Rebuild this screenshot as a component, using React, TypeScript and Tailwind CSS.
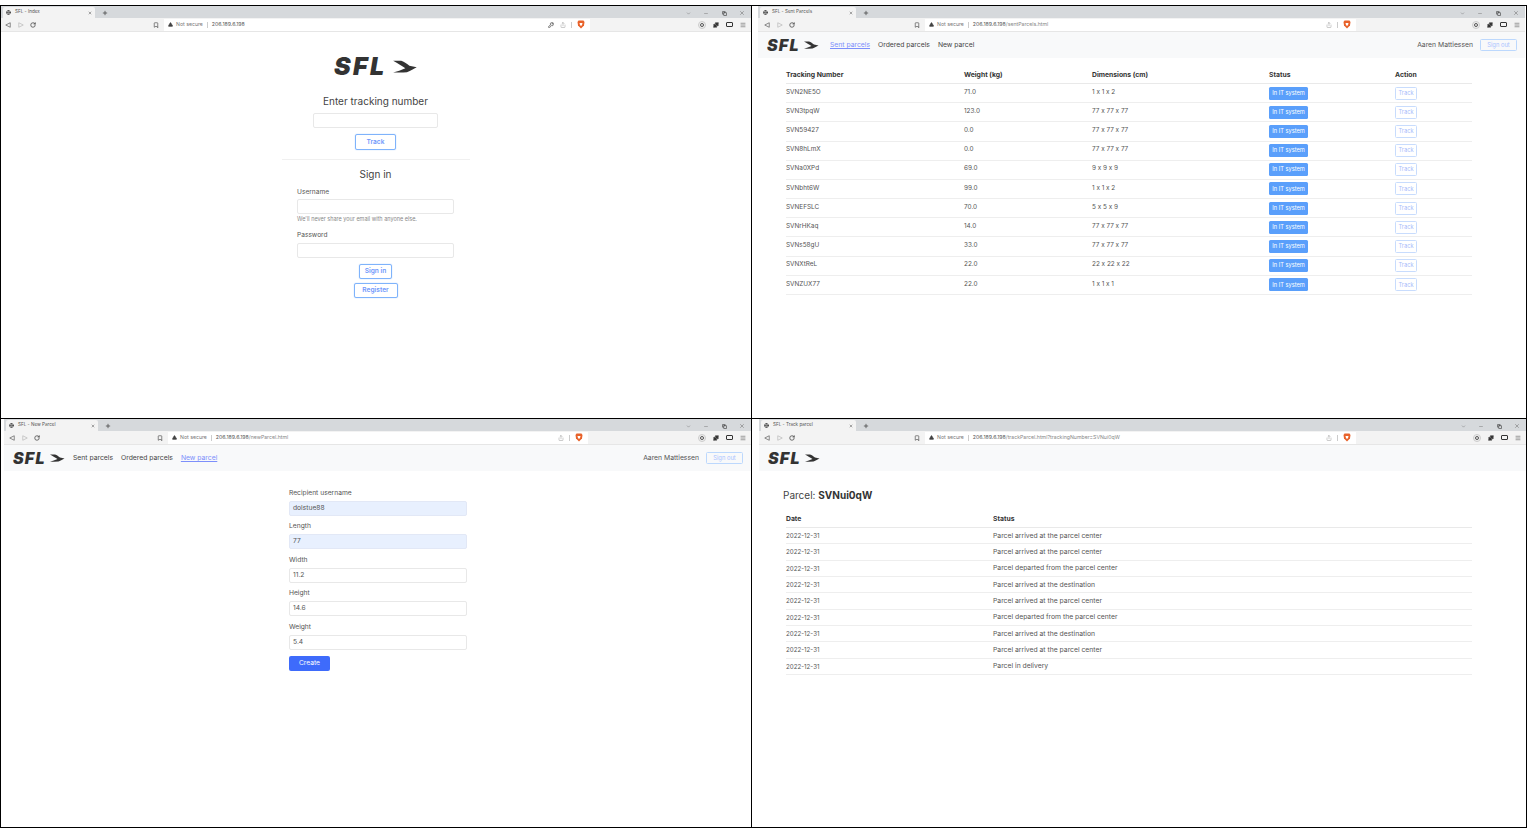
import { AlertTriangle, ChevronDown, Copy, Globe, KeyRound, Menu, Minus, Plus, RotateCw, Share, Bookmark, Puzzle, X } from "lucide-react";

const sentParcels = [
  ["SVN2NE5O", "71.0", "1 x 1 x 2"],
  ["SVN3tpqW", "123.0", "77 x 77 x 77"],
  ["SVN59427", "0.0", "77 x 77 x 77"],
  ["SVN8hLmX", "0.0", "77 x 77 x 77"],
  ["SVNa0XPd", "69.0", "9 x 9 x 9"],
  ["SVNbht6W", "99.0", "1 x 1 x 2"],
  ["SVNEFSLC", "70.0", "5 x 5 x 9"],
  ["SVNrHKaq", "14.0", "77 x 77 x 77"],
  ["SVNs58gU", "33.0", "77 x 77 x 77"],
  ["SVNXtReL", "22.0", "22 x 22 x 22"],
  ["SVNZUX77", "22.0", "1 x 1 x 1"],
];

const trackEvents = [
  "Parcel arrived at the parcel center",
  "Parcel arrived at the parcel center",
  "Parcel departed from the parcel center",
  "Parcel arrived at the destination",
  "Parcel arrived at the parcel center",
  "Parcel departed from the parcel center",
  "Parcel arrived at the destination",
  "Parcel arrived at the parcel center",
  "Parcel in delivery",
];

const formFields = [
  { label: "Recipient username", value: "dolstue88", filled: true },
  { label: "Length", value: "77", filled: true },
  { label: "Width", value: "11.2", filled: false },
  { label: "Height", value: "14.6", filled: false },
  { label: "Weight", value: "5.4", filled: false },
];

function Bird({ className }: { className: string }) {
  return (
    <svg viewBox="0 0 32 16" className={className} fill="#333">
      <path d="M3 1H13C17 2 20 5 23 7L32 9C28 11 25 13 20 15C14 15.5 8 15.5 3 15.5C8 14 13 12 18 10C14 8 9 4 3 1Z" />
    </svg>
  );
}

function Logo({ large }: { large?: boolean }) {
  if (large) {
    return (
      <div className="flex h-[20px] w-[83px] items-center gap-[3px]">
        <span className="text-[25px] leading-none font-black tracking-[2.4px] text-[#333] italic">SFL</span>
        <Bird className="h-[13px] w-[28px]" />
      </div>
    );
  }
  return (
    <div className="flex h-[14px] w-[54px] items-center gap-[2px]">
      <span className="text-[16px] leading-none font-black tracking-[1.2px] text-[#333] italic">SFL</span>
      <Bird className="h-[8px] w-[17px]" />
    </div>
  );
}

function BraveIcon() {
  return (
    <svg viewBox="0 0 16 18" className="h-[9px] w-[8px]">
      <path d="M3 1H13L15 4L14 11L8 17L2 11L1 4Z" fill="#e8622a" />
      <path d="M5 6H11L10 10L8 12L6 10Z" fill="#fff" />
    </svg>
  );
}

function Chrome({
  title,
  url,
  tabClass,
  navClass,
  urlClass,
  showKey,
}: {
  title: string;
  url: string;
  tabClass: string;
  navClass: string;
  urlClass: string;
  showKey?: boolean;
}) {
  const parts = url.split("206.189.6.198");
  return (
    <>
      <div className="flex h-[12px] items-end bg-[#d6d9dc] pr-[6px]">
        <div className={`flex h-[11px] items-center rounded-t-[2px] bg-[#f3f3f3] pr-[3px] pl-[3px] ${tabClass}`}>
          <Globe className="h-[5px] w-[5px] text-[#444]" strokeWidth={3} />
          <span className="ml-[4px] text-[4.6px] whitespace-nowrap text-[#555]">{title}</span>
          <X className="ml-auto h-[4px] w-[4px] text-[#555]" strokeWidth={3} />
        </div>
        <Plus className="mb-[2px] ml-[7px] h-[6px] w-[6px] text-[#444]" strokeWidth={3} />
        <div className="mb-[2px] ml-auto flex items-center gap-[12.5px] text-[#666]">
          <ChevronDown className="h-[5px] w-[5px]" strokeWidth={2} />
          <Minus className="h-[5px] w-[6px]" strokeWidth={2} />
          <Copy className="h-[5px] w-[5px] text-[#333]" strokeWidth={3} />
          <X className="h-[6px] w-[6px]" strokeWidth={2} />
        </div>
      </div>
      <div className="flex h-[14px] items-center border-b border-[#e6e6e6] bg-[#f3f3f3] pr-[5px]">
        <div className={`flex items-center ${navClass}`}>
          <svg viewBox="0 0 8 8" className="h-[6px] w-[6px]">
            <path d="M7 1V7L1 4Z" fill="none" stroke="#666" />
          </svg>
          <svg viewBox="0 0 8 8" className="ml-[7px] h-[6px] w-[6px]">
            <path d="M1 1V7L7 4Z" fill="none" stroke="#bbb" />
          </svg>
          <RotateCw className="ml-[6px] h-[6px] w-[6px] text-[#444]" strokeWidth={3} />
          <Bookmark className="mr-[1px] ml-auto h-[6px] w-[6px] text-[#444]" strokeWidth={2.5} />
        </div>
        <div className={`ml-[4px] flex h-[12px] items-center bg-white pr-[5px] pl-[4px] ${urlClass}`}>
          <AlertTriangle className="h-[5px] w-[5px] fill-[#444] text-[#444]" strokeWidth={2} />
          <span className="ml-[3px] text-[5.2px] text-[#777]">Not secure</span>
          <span className="mx-[4px] h-[6px] w-px bg-[#ccc]" />
          <span className="text-[5.2px] text-[#555]">206.189.6.198</span>
          <span className="text-[5.2px] text-[#888]">{parts[1]}</span>
          {showKey && <KeyRound className="ml-auto h-[6px] w-[6px] text-[#444]" strokeWidth={2.5} />}
          <Share className={`h-[6px] w-[6px] text-[#999] ${showKey ? "ml-[6px]" : "ml-auto"}`} />
          <span className="mx-[5px] h-[6px] w-px bg-[#ccc]" />
          <BraveIcon />
        </div>
        <div className="ml-auto flex items-center gap-[7px]">
          <span className="flex h-[8px] w-[8px] items-center justify-center rounded-full border border-[#ccc] bg-[#eee]">
            <span className="h-[4px] w-[4px] rounded-full border border-[#555]" />
          </span>
          <Puzzle className="h-[6px] w-[6px] fill-[#333] text-[#333]" />
          <span className="h-[5px] w-[7px] rounded-[1px] border border-[#333]" />
          <Menu className="h-[6px] w-[6px] text-[#666]" strokeWidth={2.5} />
        </div>
      </div>
    </>
  );
}

function Navbar({ active, linksClass, signedIn = true }: { active?: string; linksClass?: string; signedIn?: boolean }) {
  const links = ["Sent parcels", "Ordered parcels", "New parcel"];
  return (
    <div className="flex h-[26px] items-center bg-[#f8f9fa] pr-[8px] pl-[9px]">
      <Logo />
      {signedIn && (
        <>
          <div className={`flex gap-[8px] pt-[1px] text-[6.8px] ${linksClass}`}>
            {links.map((link) => (
              <span key={link} className={link === active ? "text-[#7d8ffb] underline" : "text-[#444]"}>
                {link}
              </span>
            ))}
          </div>
          <span className="ml-auto pt-[1px] text-[6.8px] text-[#555]">Aaren Mattiessen</span>
          <span className="ml-[7px] flex h-[12px] w-[37px] items-center justify-center rounded-[1.5px] border border-[#bcd8fd] text-[5.8px] text-[#a9c2ff]">
            Sign out
          </span>
        </>
      )}
    </div>
  );
}

function Field({ className }: { className: string }) {
  return <div className={`h-[15px] rounded-[2px] border border-[#e8e8e8] bg-white ${className}`} />;
}

function OutlineButton({ children, className }: { children: string; className: string }) {
  return (
    <div
      className={`flex items-center justify-center rounded-[2px] border border-[#7fb3fb] pt-[1px] text-[6.6px] font-semibold text-[#7098fb] shadow-[0_0_1px_#7fb3fb] ${className}`}
    >
      {children}
    </div>
  );
}

function IndexPage() {
  return (
    <div className="flex flex-col items-center pt-[24px] pr-[1px] text-[#444]">
      <Logo large />
      <h2 className="mt-[19px] text-[10px] leading-[12px] text-[#444]">Enter tracking number</h2>
      <Field className="mt-[6px] w-[125px]" />
      <OutlineButton className="mt-[6px] h-[16px] w-[41px]">Track</OutlineButton>
      <div className="mt-[9px] w-[188px] border-t border-[#f0f0f0]" />
      <h2 className="mt-[8px] text-[10px] leading-[13px]">Sign in</h2>
      <div className="mt-[5px] w-[157px] text-[6.6px]">
        <div className="pt-[1px] leading-[10px] text-[#555]">Username</div>
        <Field className="mt-[2px] w-[157px]" />
        <div className="mt-[2px] text-[5.5px] leading-[7px] text-[#888]">We'll never share your email with anyone else.</div>
        <div className="mt-[7px] leading-[10px] text-[#555]">Password</div>
        <Field className="mt-[3px] w-[157px]" />
      </div>
      <OutlineButton className="mt-[6px] h-[15px] w-[33px]">Sign in</OutlineButton>
      <OutlineButton className="mt-[4px] h-[15px] w-[44px]">Register</OutlineButton>
    </div>
  );
}

function SentParcelsPage() {
  return (
    <div className="pt-[10px] pl-[28px] text-[6.4px] text-[#555] [font-feature-settings:'calt'_0]">
      <div className="grid h-[16px] w-[686px] grid-cols-[178px_128px_177px_126px_77px] items-center border-b border-[#e9e9e9] text-[6.8px] font-bold text-[#333]">
        <span>Tracking Number</span>
        <span>Weight (kg)</span>
        <span>Dimensions (cm)</span>
        <span>Status</span>
        <span>Action</span>
      </div>
      {sentParcels.map(([id, weight, dims]) => (
        <div
          key={id}
          className="grid h-[19.18px] w-[686px] grid-cols-[178px_128px_177px_126px_77px] items-center border-b border-[#eeeeee]"
        >
          <span className="-mt-[1px]">{id}</span>
          <span className="-mt-[1px]">{weight}</span>
          <span className="-mt-[1px]">{dims}</span>
          <span className="flex h-[13px] w-[39px] items-center justify-center rounded-[1.5px] bg-[#5a9ffb] text-[5.7px] text-white">
            In IT system
          </span>
          <span className="flex h-[13px] w-[22px] items-center justify-center rounded-[1.5px] border border-[#c8dcfd] text-[5.7px] text-[#a9bdfb]">
            Track
          </span>
        </div>
      ))}
    </div>
  );
}

function NewParcelPage() {
  return (
    <div className="ml-[285px] w-[178px] pt-[15.5px] text-[6.7px]">
      {formFields.map((field) => (
        <div key={field.label} className="mb-[4.5px]">
          <div className="h-[14px] leading-[12px] text-[#555]">{field.label}</div>
          <div
            className={`flex h-[15px] items-center rounded-[2px] border px-[3px] text-[#555] ${
              field.filled ? "border-[#e2e8f6] bg-[#e8f0fe]" : "border-[#e8e8e8] bg-white"
            }`}
          >
            {field.value}
          </div>
        </div>
      ))}
      <div className="mt-[6px] flex h-[15px] w-[41px] items-center justify-center rounded-[2px] bg-[#3e6bfb] text-white">
        Create
      </div>
    </div>
  );
}

function TrackPage() {
  return (
    <div className="pt-[17px] pl-[24px] text-[6.8px] text-[#555]">
      <h1 className="text-[10px] leading-[14px] text-[#444]">
        Parcel: <strong className="font-bold text-[#333]">SVNui0qW</strong>
      </h1>
      <div className="mt-[10px] ml-[3px] w-[686px]">
        <div className="grid h-[16px] grid-cols-[207px_479px] items-center border-b border-[#e9e9e9] font-bold text-[#333]">
          <span>Date</span>
          <span>Status</span>
        </div>
        {trackEvents.map((event, index) => (
          <div key={index} className="grid h-[16.33px] grid-cols-[207px_479px] items-center border-b border-[#eeeeee]">
            <span className="text-[6.2px]">2022-12-31</span>
            <span>{event}</span>
          </div>
        ))}
      </div>
    </div>
  );
}

export default function App() {
  return (
    <div className="h-[831px] w-[1530px] overflow-hidden bg-white pt-[5px] font-[Inter,sans-serif]">
      <div className="grid h-[823px] w-[1527px] grid-cols-[751px_775px] grid-rows-[413px_409px] border-r border-b border-black">
        <div className="border-t border-l border-black">
          <Chrome
            title="SFL - Index"
            url="206.189.6.198"
            tabClass="ml-[2px] w-[92px]"
            navClass="w-[159px] pl-[4px]"
            urlClass="w-[426px]"
            showKey
          />
          <IndexPage />
        </div>
        <div className="border-t border-l border-black">
          <div className="mr-[1px] ml-[6px]">
            <Chrome
              title="SFL - Sent Parcels"
              url="206.189.6.198/sentParcels.html"
              tabClass="ml-[2px] w-[96px]"
              navClass="w-[163px] pl-[6px]"
              urlClass="w-[431px]"
            />
            <Navbar active="Sent parcels" linksClass="ml-[9px]" />
            <SentParcelsPage />
          </div>
        </div>
        <div className="border-t border-l border-black">
          <div className="ml-[3px]">
            <Chrome
              title="SFL - New Parcel"
              url="206.189.6.198/newParcel.html"
              tabClass="ml-[2px] w-[92px]"
              navClass="w-[160px] pl-[5px]"
              urlClass="w-[420px]"
            />
            <Navbar active="New parcel" linksClass="ml-[6px]" />
            <NewParcelPage />
          </div>
        </div>
        <div className="border-t border-l border-black">
          <div className="ml-[7px]">
            <Chrome
              title="SFL - Track parcel"
              url="206.189.6.198/trackParcel.html?trackingNumber=SVNui0qW"
              tabClass="ml-[2px] w-[95px]"
              navClass="w-[162px] pl-[5px]"
              urlClass="w-[431px]"
            />
            <Navbar signedIn={false} />
            <TrackPage />
          </div>
        </div>
      </div>
    </div>
  );
}
